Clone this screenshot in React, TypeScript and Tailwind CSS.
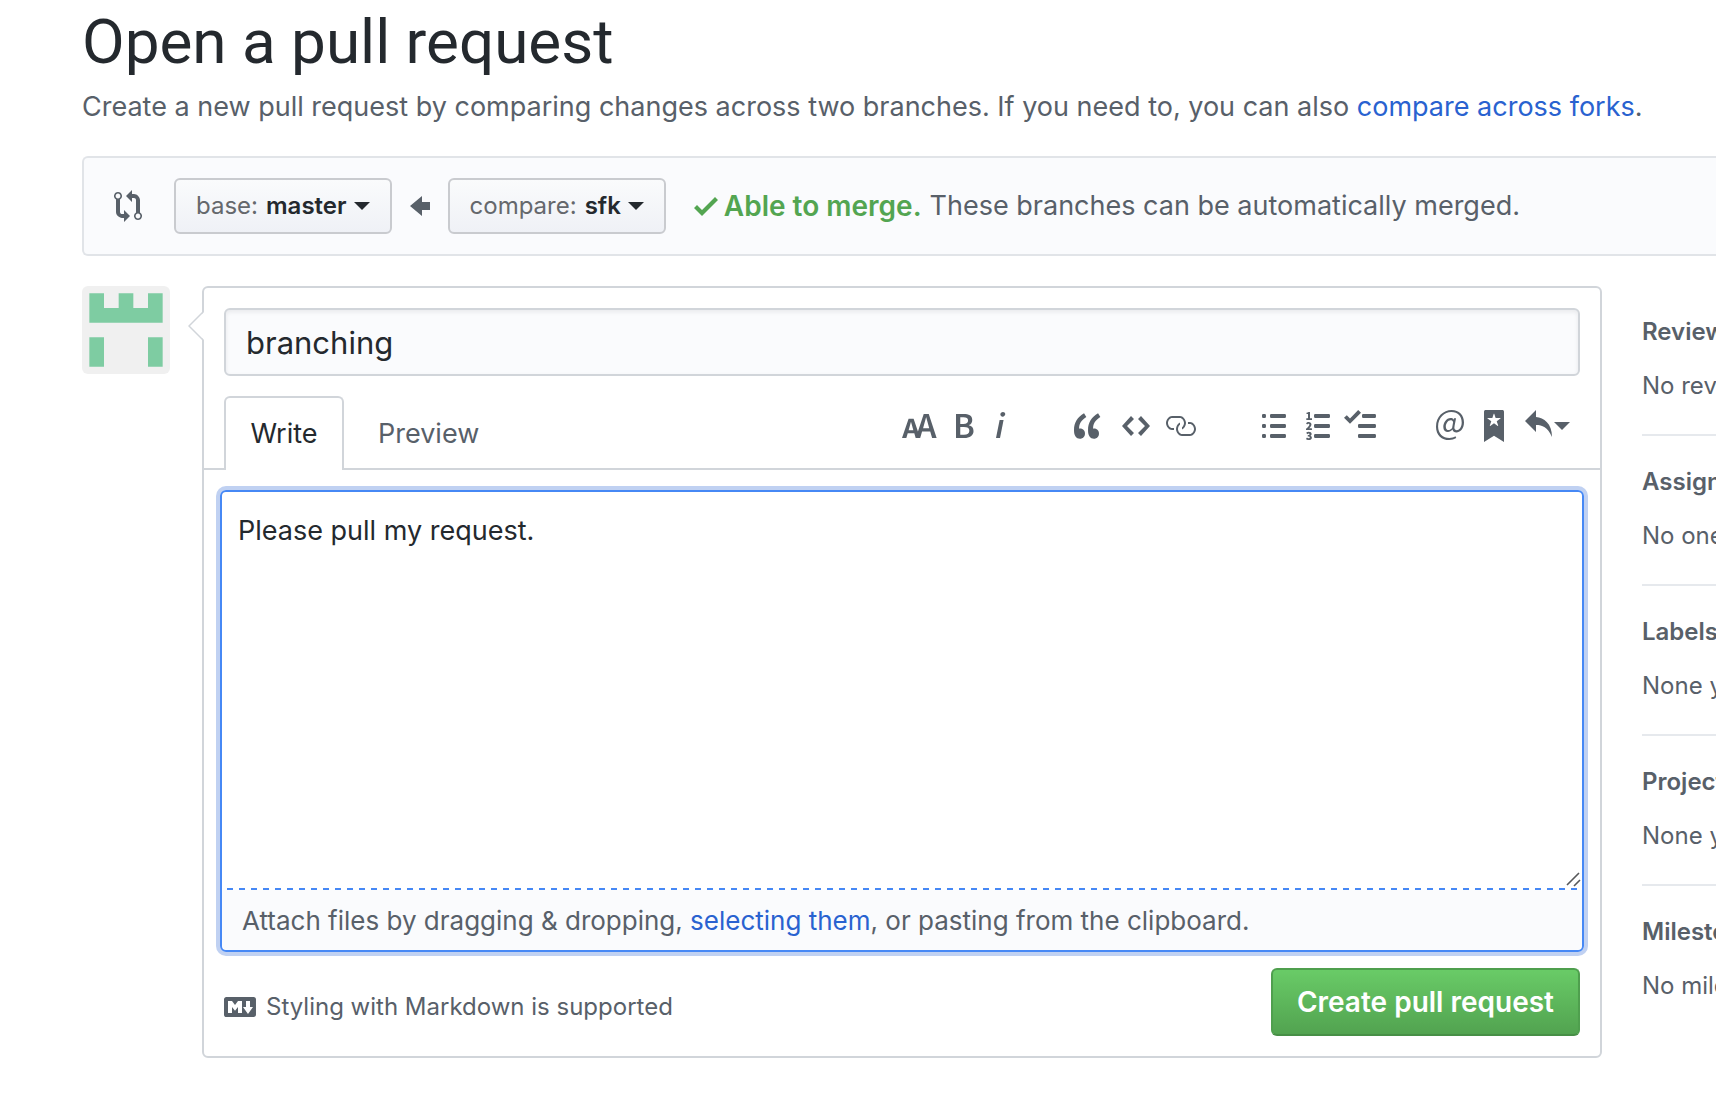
import React from "react";

type IconProps = { w: number; d: string; className?: string };

function Octicon({ w, d, className = "" }: IconProps) {
  return (
    <svg
      aria-hidden="true"
      width={w * 2}
      height={32}
      viewBox={`0 0 ${w} 16`}
      fill="currentColor"
      className={`block shrink-0 ${className}`}
    >
      <path fillRule="evenodd" d={d} />
    </svg>
  );
}

const paths = {
  compare:
    "M5 12H4c-.27-.02-.48-.11-.69-.31-.21-.2-.3-.42-.31-.69V4.72A1.993 1.993 0 0 0 2 1a1.993 1.993 0 0 0-1 3.72V11c.03.78.34 1.47.94 2.06.6.59 1.28.91 2.06.94h1v2l3-3-3-3v2zM2 1.8c.66 0 1.2.55 1.2 1.2 0 .65-.55 1.2-1.2 1.2C1.35 4.2.8 3.65.8 3c0-.65.55-1.2 1.2-1.2zm11 9.48V5c-.03-.78-.34-1.47-.94-2.06-.6-.59-1.28-.91-2.06-.94H9V0L6 3l3 3V4h1c.27.02.48.11.69.31.21.2.3.42.31.69v6.28A1.993 1.993 0 0 0 12 15a1.993 1.993 0 0 0 1-3.72zm-1 2.92c-.66 0-1.2-.55-1.2-1.2 0-.65.55-1.2 1.2-1.2.65 0 1.2.55 1.2 1.2 0 .65-.55 1.2-1.2 1.2z",
  arrowLeft: "M6 3L0 8l6 5v-3h4V6H6V3z",
  check: "M12 5l-8 8-4-4 1.5-1.5L4 10l6.5-6.5L12 5z",
  markdown:
    "M14.85 3H1.15C.52 3 0 3.52 0 4.15v7.69C0 12.48.52 13 1.15 13h13.69c.64 0 1.15-.52 1.15-1.15v-7.7C16 3.52 15.48 3 14.85 3zM9 11H7V8L5.5 9.92 4 8v3H2V5h2l1.5 2L7 5h2v6zm2.99.5L9.5 8H11V5h2v3h1.5l-2.51 3.5z",
};

type Tool = { label: string; w: number; d: string; gap?: string; caret?: boolean };

const toolGroups: Tool[][] = [
  [
    {
      label: "Add header text",
      w: 18,
      d: "M13.62 9.08L12.1 3.66h-.06l-1.5 5.42h3.08zM5.7 10.13S4.68 6.52 4.53 6.02h-.08l-1.13 4.11H5.7zM17.31 14h-2.25l-.95-3.25h-4.07L9.09 14H6.84l-.69-2.33H2.87L2.17 14H0l3.3-9.59h2.5l2.17 6.34L10.86 2h2.52l3.94 12h-.01z",
    },
    {
      label: "Add bold text",
      w: 10,
      gap: "ml-4",
      d: "M1 2h3.83c2.48 0 4.3.75 4.3 2.95 0 1.14-.63 2.23-1.67 2.61v.06c1.33.3 2.3 1.23 2.3 2.86 0 2.39-1.97 3.52-4.61 3.52H1V2zm3.66 4.95c1.67 0 2.38-.66 2.38-1.69 0-1.17-.78-1.61-2.34-1.61H3.13v3.3h1.53zm.27 5.39c1.77 0 2.75-.64 2.75-1.98 0-1.27-.95-1.81-2.75-1.81h-1.8v3.8h1.8v-.01z",
    },
    {
      label: "Add italic text",
      w: 6,
      gap: "ml-5",
      d: "M2.81 5h1.98L3 14H1l1.81-9zm.36-2.7c0-.7.58-1.3 1.33-1.3.56 0 1.13.38 1.13 1.03 0 .75-.59 1.3-1.33 1.3-.58 0-1.13-.38-1.13-1.03z",
    },
  ],
  [
    {
      label: "Insert a quote",
      w: 14,
      d: "M6.16 3.5C3.73 5.06 2.55 6.67 2.55 9.36c.16-.05.3-.05.44-.05 1.27 0 2.5.86 2.5 2.41 0 1.61-1.03 2.61-2.5 2.61-1.9 0-2.99-1.52-2.99-4.25 0-3.8 1.75-6.53 5.02-8.42L6.16 3.5zm7 0c-2.43 1.56-3.61 3.17-3.61 5.86.16-.05.3-.05.44-.05 1.27 0 2.5.86 2.5 2.41 0 1.61-1.03 2.61-2.5 2.61-1.89 0-2.98-1.52-2.98-4.25 0-3.8 1.75-6.53 5.02-8.42l1.14 1.84h-.01z",
    },
    {
      label: "Insert code",
      w: 14,
      gap: "ml-5",
      d: "M9.5 3L8 4.5 11.5 8 8 11.5 9.5 13 14 8 9.5 3zm-5 0L0 8l4.5 5L6 11.5 2.5 8 6 4.5 4.5 3z",
    },
    {
      label: "Add a link",
      w: 16,
      gap: "ml-3.5",
      d: "M4 9h1v1H4c-1.5 0-3-1.69-3-3.5S2.55 3 4 3h4c1.45 0 3 1.69 3 3.5 0 1.41-.91 2.72-2 3.25V8.59c.58-.45 1-1.27 1-2.09C10 5.22 8.98 4 8 4H4c-.98 0-2 1.22-2 2.5S3 9 4 9zm9-3h-1v1h1c1 0 2 1.22 2 2.5S13.98 12 13 12H9c-.98 0-2-1.22-2-2.5 0-.83.42-1.64 1-2.09V6.25c-1.09.53-2 1.84-2 3.25C6 11.31 7.55 13 9 13h4c1.45 0 3-1.69 3-3.5S14.5 6 13 6z",
    },
  ],
  [
    {
      label: "Add a bulleted list",
      w: 12,
      d: "M2 13c0 .59 0 1-.59 1H.59C0 14 0 13.59 0 13c0-.59 0-1 .59-1h.81c.59 0 .59.41.59 1H2zm2.59-9h6.81c.59 0 .59-.41.59-1 0-.59 0-1-.59-1H4.59C4 2 4 2.41 4 3c0 .59 0 1 .59 1zM1.41 7H.59C0 7 0 7.41 0 8c0 .59 0 1 .59 1h.81c.59 0 .59-.41.59-1 0-.59 0-1-.59-1h.01zm0-5H.59C0 2 0 2.41 0 3c0 .59 0 1 .59 1h.81c.59 0 .59-.41.59-1 0-.59 0-1-.59-1h.01zm10 5H4.59C4 7 4 7.41 4 8c0 .59 0 1 .59 1h6.81c.59 0 .59-.41.59-1 0-.59 0-1-.59-1h.01zm0 5H4.59C4 12 4 12.41 4 13c0 .59 0 1 .59 1h6.81c.59 0 .59-.41.59-1 0-.59 0-1-.59-1h.01z",
    },
    {
      label: "Add a numbered list",
      w: 12,
      gap: "ml-5",
      d: "M12.01 13c0 .59 0 1-.59 1H4.6c-.59 0-.59-.41-.59-1 0-.59 0-1 .59-1h6.81c.59 0 .59.41.59 1h.01zM4.6 4h6.81C12 4 12 3.59 12 3c0-.59 0-1-.59-1H4.6c-.59 0-.59.41-.59 1 0 .59 0 1 .59 1zm6.81 3H4.6c-.59 0-.59.41-.59 1 0 .59 0 1 .59 1h6.81C12 9 12 8.59 12 8c0-.59 0-1-.59-1zM2 1h-.72c-.3.19-.58.25-1.03.34V2H1v2.14H.16V5H3v-.86H2V1zm.25 8.13c-.17 0-.45.03-.66.06.53-.56 1.14-1.25 1.14-1.89C2.72 6.52 2.17 6 1.38 6c-.59 0-.97.2-1.38.64l.58.58c.19-.19.38-.38.64-.38.28 0 .48.16.48.52 0 .53-.77 1.2-1.7 2.06V10H3l-.09-.88h-.66v.01zm-.08 3.78v-.03c.44-.19.64-.47.64-.86 0-.7-.56-1.11-1.44-1.11-.48 0-.89.19-1.28.52l.55.64c.25-.2.44-.31.69-.31.27 0 .42.13.42.36 0 .27-.2.44-.86.44v.75c.83 0 .98.17.98.47 0 .25-.23.38-.58.38-.28 0-.56-.14-.81-.38l-.48.66c.3.36.77.56 1.41.56.83 0 1.53-.41 1.53-1.16 0-.5-.31-.81-.77-.94v.01z",
    },
    {
      label: "Add a task list",
      w: 16,
      gap: "ml-3.5",
      d: "M15.41 9H7.59C7 9 7 8.59 7 8c0-.59 0-1 .59-1h7.81c.59 0 .59.41.59 1 0 .59 0 1-.59 1h.01zM9.59 4C9 4 9 3.59 9 3c0-.59 0-1 .59-1h5.81c.59 0 .59.41.59 1 0 .59 0 1-.59 1H9.59zM0 3.91l1.41-1.3L3 4.2 7.09 0 8.5 1.41 3 6.91l-3-3zM7.59 12h7.81c.59 0 .59.41.59 1 0 .59 0 1-.59 1H7.59C7 14 7 13.59 7 13c0-.59 0-1 .59-1z",
    },
  ],
  [
    {
      label: "Mention a user or team",
      w: 14,
      d: "M6.58 15c1.25 0 2.52-.31 3.56-.94l-.42-.94c-.84.52-1.89.83-3.03.83-3.23 0-5.64-2.08-5.64-5.72 0-4.37 3.23-7.18 6.58-7.18 3.45 0 5.22 2.19 5.22 5.2 0 2.39-1.34 3.86-2.5 3.86-1.05 0-1.36-.73-1.05-2.19l.73-3.75H8.98l-.11.72c-.41-.63-.94-.83-1.56-.83-2.19 0-3.66 2.39-3.66 4.38 0 1.67.94 2.61 2.3 2.61.84 0 1.67-.53 2.3-1.25.11.94.94 1.45 1.98 1.45 1.67 0 3.77-1.67 3.77-5C14 2.61 11.59 0 7.83 0 3.66 0 0 3.33 0 8.33 0 12.71 2.92 15 6.58 15zm-.31-5c-.73 0-1.36-.52-1.36-1.67 0-1.45.94-3.22 2.41-3.22.52 0 .84.2 1.25.83l-.52 3.02c-.63.73-1.25 1.05-1.78 1.05V10z",
    },
    {
      label: "Reference an issue or pull request",
      w: 10,
      gap: "ml-5",
      d: "M9 0H1C.27 0 0 .27 0 1v15l5-3.09L10 16V1c0-.73-.27-1-1-1zm-.78 4.25L6.36 5.61l.72 2.16c.06.22-.02.28-.2.17L5 6.6 3.12 7.94c-.19.11-.25.05-.2-.17l.72-2.16-1.86-1.36c-.17-.16-.14-.23.09-.23l2.3-.03.7-2.16h.25l.7 2.16 2.3.03c.23 0 .27.08.09.23h.01z",
    },
    {
      label: "Insert a reply",
      w: 14,
      gap: "ml-5",
      caret: true,
      d: "M6 3.5c3.92.44 8 3.125 8 10-2.312-5.062-4.75-6-8-6V11L.5 5.5 6 0v3.5z",
    },
  ],
];

const groupGaps = ["", "ml-[68px]", "ml-[66px]", "ml-15"];

function Caret() {
  return (
    <svg aria-hidden="true" width="16" height="8" viewBox="0 0 16 8" fill="currentColor" className="block shrink-0">
      <path d="M0 0h16L8 8z" />
    </svg>
  );
}

function BranchButton({ kind, name }: { kind: string; name: string }) {
  return (
    <button
      type="button"
      className="flex h-14 items-center rounded-md border-2 border-[#c9cbcf] bg-linear-to-b from-[#fafbfc] to-[#eff1f6] px-5 text-2xl text-[#24292e]"
    >
      <span className="text-[#65686c]">{kind}:</span>
      <span className="mr-[7px] ml-2 font-semibold">{name}</span>
      <Caret />
    </button>
  );
}

function Avatar() {
  return (
    <svg role="img" aria-label="Avatar" viewBox="0 0 420 420" className="block size-[88px] shrink-0 rounded-md bg-[#f0f0f0]">
      <path fill="#7ecca2" d="M35 35h70v70h70V35h70v70h70V35h70v140H35zM35 245h70v140H35zM315 245h70v140h-70z" />
    </svg>
  );
}

const sidebar = [
  ["Reviewers", "No reviews"],
  ["Assignees", "No one"],
  ["Labels", "None yet"],
  ["Projects", "None yet"],
  ["Milestone", "No milestone"],
];

export default function App() {
  return (
    <div className="min-h-screen overflow-hidden bg-white pb-10 pl-[82px] font-['Inter',sans-serif] text-[27px] leading-[42px] text-[#586069]">
      <header className="pt-0.5">
        <h1 className="font-['Roboto',sans-serif] text-[62px] leading-20 font-normal whitespace-nowrap text-[#24292e]">
          Open a pull request
        </h1>
        <p className="mt-1 whitespace-nowrap">
          Create a new pull request by comparing changes across two branches. If you need to, you can also{" "}
          <a href="#forks" className="text-[#2962d0]">compare across forks</a>.
        </p>
      </header>

      <section className="mt-7 flex h-[100px] items-center rounded-l-md border-2 border-r-0 border-[#e1e4e8] bg-[#fafbfd] pl-[30px]">
        <Octicon w={14} d={paths.compare} className="mr-8" />
        <BranchButton kind="base" name="master" />
        <Octicon w={10} d={paths.arrowLeft} className="mx-[18px]" />
        <BranchButton kind="compare" name="sfk" />
        <p className="ml-7 flex items-center whitespace-nowrap">
          <Octicon w={12} d={paths.check} className="mr-1.5 text-[#53a551]" />
          <strong className="mr-2 text-[28px] font-semibold text-[#53a551]">Able to merge.</strong>
          These branches can be automatically merged.
        </p>
      </section>

      <div className="mt-[30px] flex items-start">
        <Avatar />
        <form
          className="relative ml-8 min-w-0 flex-1 rounded-md border-2 border-[#d1d5da]"
          onSubmit={(e) => e.preventDefault()}
        >
          <svg aria-hidden="true" width="18" height="30" viewBox="0 0 18 30" className="absolute top-[23px] -left-4">
            <path d="M18 0h-2v1L2 15l14 14v1h2z" fill="#fff" />
            <path d="M15 1L1 15l14 14" fill="none" stroke="#d1d5da" strokeWidth="1.5" />
          </svg>

          <div className="px-5 pt-5">
            <input
              aria-label="Title"
              defaultValue="branching"
              className="block h-[68px] w-full rounded-md border-2 border-[#d1d5da] bg-[#fafbfd] px-5 text-[31px] text-[#24292e] shadow-[inset_0_2px_4px_rgba(27,31,35,0.08)] outline-none"
            />
          </div>

          <div className="mt-5 flex items-start border-b-2 border-[#d1d5da] px-5">
            <div role="tablist" className="-mb-0.5 flex">
              <button
                type="button"
                role="tab"
                aria-selected="true"
                className="h-[74px] w-[120px] rounded-t-md border-2 border-b-0 border-[#d1d5da] bg-white text-[#24292e]"
              >
                Write
              </button>
              <button
                type="button"
                role="tab"
                aria-selected="false"
                className="h-[74px] border-2 border-b-0 border-transparent px-8"
              >
                Preview
              </button>
            </div>
            <div role="toolbar" aria-label="Formatting" className="mt-3.5 mr-2.5 ml-auto flex">
              {toolGroups.map((group, i) => (
                <div key={i} className={`flex ${groupGaps[i]}`}>
                  {group.map((t) => (
                    <button key={t.label} type="button" aria-label={t.label} className={`flex items-center ${t.gap ?? ""}`}>
                      <Octicon w={t.w} d={t.d} />
                      {t.caret && (
                        <span className="ml-0.5">
                          <Caret />
                        </span>
                      )}
                    </button>
                  ))}
                </div>
              ))}
            </div>
          </div>

          <div className="mx-4 mt-5 rounded-md border-2 border-[#4688f5] ring-4 ring-[#c0d1f2]">
            <div className="relative">
              <textarea
                aria-label="Comment body"
                defaultValue="Please pull my request."
                className="block h-[396px] w-full resize-none rounded-t-md bg-white px-4 pt-[18px] pb-4 text-[#24292e] outline-none"
              />
              <svg aria-hidden="true" width="16" height="16" viewBox="0 0 16 16" className="absolute right-px bottom-px">
                <path d="M2 14L14 2M9 15l6-6" stroke="#57585a" strokeWidth="1.6" fill="none" />
              </svg>
            </div>
            <div className="h-0.5 bg-[repeating-linear-gradient(90deg,transparent_0_5px,#4688f5_5px_11px,transparent_11px_12px)]" />
            <p className="rounded-b-md bg-[#fafbfd] px-5 pt-[11px] pb-[9px] text-[26px] leading-10">
              Attach files by dragging &amp; dropping,{" "}
              <button type="button" className="text-[#2962d0]">selecting them</button>, or pasting from the clipboard.
            </p>
          </div>

          <div className="mt-4 flex items-center px-5 pb-5">
            <a href="#markdown" className="flex items-center gap-2.5 pt-2.5 text-2xl">
              <Octicon w={16} d={paths.markdown} />
              Styling with Markdown is supported
            </a>
            <button
              type="submit"
              className="ml-auto h-[68px] rounded-md border-2 border-[#4f9f4e] border-b-[#478f46] bg-linear-to-b from-[#69cb67] to-[#52a350] px-6 text-[28px] font-semibold text-white"
            >
              Create pull request
            </button>
          </div>
        </form>

        <aside className="ml-10 w-[74px] shrink-0 overflow-hidden pt-7 text-2xl whitespace-nowrap">
          {sidebar.map(([title, value], i) => (
            <section key={title} className={i === 4 ? "h-[122px]" : "mb-7 h-[122px] border-b-2 border-[#e6e9ed]"}>
              <h2 className="leading-9 font-semibold">{title}</h2>
              <p className="mt-[18px] leading-9">{value}</p>
            </section>
          ))}
        </aside>
      </div>
    </div>
  );
}
